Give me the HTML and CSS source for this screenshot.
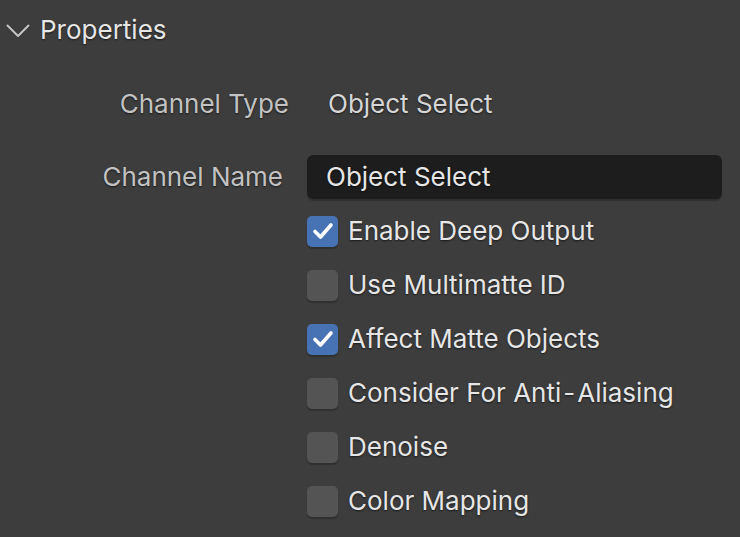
FILE: index.html
```html
<!DOCTYPE html>
<html lang="en">
<head>
    <meta charset="UTF-8">
    <meta name="viewport" content="width=device-width, initial-scale=1.0">
    <title>Properties</title>
    <link rel="stylesheet" href="styles.css">
</head>
<body>

    <div class="panel">
        <div class="panel-header">
            <svg class="chevron" width="24" height="14" viewBox="0 0 24 14">
                <path d="M1.5 1.5 L12 12 L22.5 1.5" fill="none" stroke="#c4c4c4" stroke-width="2" stroke-linecap="round" stroke-linejoin="round"/>
            </svg>
            <span class="panel-title">Properties</span>
        </div>

        <div class="prop">
            <span class="prop-label">Channel Type</span>
            <span class="prop-value">Object Select</span>
        </div>

        <div class="prop prop-field">
            <span class="prop-label">Channel Name</span>
            <div class="text-field"><span>Object Select</span></div>
        </div>

        <div class="checks">
            <label class="check">
                <span class="box checked">
                    <svg width="22" height="18" viewBox="0 0 22 18"><path d="M3 9.5 L8.5 15 L19 3" fill="none" stroke="#fff" stroke-width="3.6" stroke-linecap="round" stroke-linejoin="round"/></svg>
                </span>
                <span class="check-text">Enable Deep Output</span>
            </label>
            <label class="check">
                <span class="box"></span>
                <span class="check-text">Use Multimatte ID</span>
            </label>
            <label class="check">
                <span class="box checked">
                    <svg width="22" height="18" viewBox="0 0 22 18"><path d="M3 9.5 L8.5 15 L19 3" fill="none" stroke="#fff" stroke-width="3.6" stroke-linecap="round" stroke-linejoin="round"/></svg>
                </span>
                <span class="check-text">Affect Matte Objects</span>
            </label>
            <label class="check">
                <span class="box"></span>
                <span class="check-text">Consider For Anti<span class="dash">-</span>Aliasing</span>
            </label>
            <label class="check">
                <span class="box"></span>
                <span class="check-text">Denoise</span>
            </label>
            <label class="check">
                <span class="box"></span>
                <span class="check-text">Color Mapping</span>
            </label>
        </div>
    </div>

</body>
</html>
```

FILE: styles.css
```css
body {
    margin: 0;
    background: #3d3d3d;
    font-family: "Inter", "Noto Sans", sans-serif;
    font-size: 26px;
    color: #e6e6e6;
    height: 537px;
    overflow: hidden;
}

.panel {
    width: 740px;
}

.panel-header {
    height: 60px;
    display: flex;
    align-items: center;
    padding-left: 6px;
}

.chevron {
    display: block;
    margin-top: 2px;
}

.panel-title {
    margin-left: 10px;
    margin-bottom: 2px;
    text-shadow: 0 1px 2px rgba(0, 0, 0, 0.6);
}

.prop {
    display: grid;
    grid-template-columns: 307px 1fr;
    align-items: center;
    height: 54px;
    margin-top: 17px;
}

.prop-label {
    text-align: right;
    padding-right: 18px;
    padding-bottom: 2px;
    color: #c2c2c2;
    text-shadow: 0 1px 2px rgba(0, 0, 0, 0.6);
}

.prop-value {
    padding-left: 21px;
    padding-bottom: 2px;
    color: #d6d6d6;
    text-shadow: 0 1px 2px rgba(0, 0, 0, 0.6);
}

.prop-field {
    margin-top: 19px;
}

.prop-field .prop-label {
    padding-right: 24px;
}

.text-field {
    width: 415px;
    height: 44px;
    box-sizing: border-box;
    background: #1d1d1d;
    border-radius: 6px;
    padding-left: 19px;
    display: flex;
    align-items: center;
    color: #e6e6e6;
    box-shadow: 0 2px 1px rgba(0, 0, 0, 0.22);
    text-shadow: 0 1px 2px rgba(0, 0, 0, 0.6);
}

.text-field span {
    margin-bottom: 2px;
}

.checks {
    padding-left: 307px;
}

.check {
    display: flex;
    align-items: center;
    height: 54px;
}

.box {
    width: 31px;
    height: 31px;
    border-radius: 5px;
    background: #545454;
    box-shadow: 0 2px 1px rgba(0, 0, 0, 0.22);
    display: flex;
    align-items: center;
    justify-content: center;
    flex-shrink: 0;
}

.box.checked {
    background: #4772b3;
}

.box svg {
    display: block;
}

.check-text {
    margin-left: 10px;
    margin-bottom: 2px;
    text-shadow: 0 1px 2px rgba(0, 0, 0, 0.6);
}

.dash {
    margin: 0 2px;
}
```
